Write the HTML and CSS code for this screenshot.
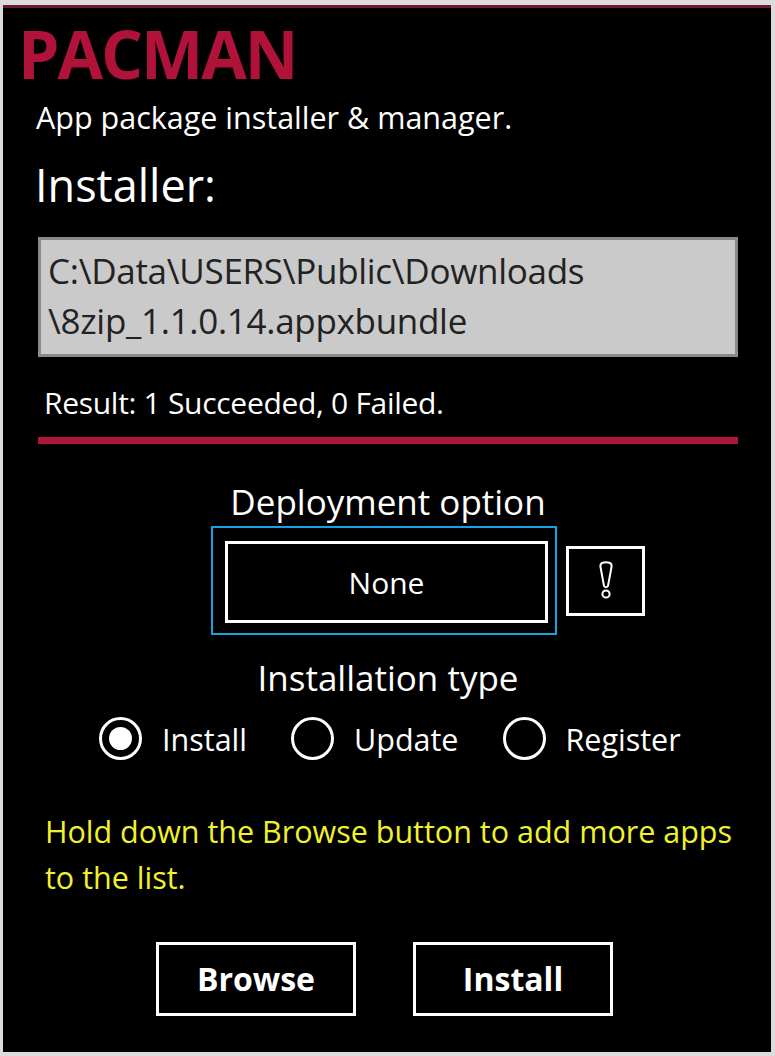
FILE: index.html
```html
<!DOCTYPE html>
<html lang="en">
<head>
    <meta charset="UTF-8">
    <meta name="viewport" content="width=device-width, initial-scale=1.0">
    <title>PACMAN</title>
    <link rel="stylesheet" href="styles.css">
</head>
<body>
    <div class="screen">
        <h1 class="app-title">PACMAN</h1>
        <p class="app-subtitle">App package installer &amp; manager.</p>
        <h2 class="section-title">Installer:</h2>

        <div class="path-box">C:\Data\USERS\Public\Downloads<br>\8zip_1.1.0.14.appxbundle</div>
        <p class="result">Result: 1 Succeeded, 0 Failed.</p>
        <div class="progress-bar"></div>

        <div class="deploy">
            <div class="label">Deployment option</div>
            <div class="deploy-row">
                <div class="focus-ring">
                    <button class="combo">None</button>
                </div>
                <button class="info-button" title="Info">
                    <svg width="18" height="40" viewBox="0 0 18 40">
                        <path d="M5 2 Q9 0.5 13 2 Q15 3 14.5 6 L11 25 Q9 27.5 7 25 L3.5 6 Q3 3 5 2 Z" fill="none" stroke="#fff" stroke-width="2" stroke-linejoin="round"/>
                        <circle cx="9" cy="33" r="3.6" fill="none" stroke="#fff" stroke-width="2"/>
                    </svg>
                </button>
            </div>
        </div>

        <div class="install-type">
            <div class="label">Installation type</div>
            <div class="radio-row">
                <label class="radio">
                    <span class="radio-circle checked"><span class="radio-dot"></span></span>
                    <span>Install</span>
                </label>
                <label class="radio">
                    <span class="radio-circle"></span>
                    <span>Update</span>
                </label>
                <label class="radio">
                    <span class="radio-circle"></span>
                    <span>Register</span>
                </label>
            </div>
        </div>

        <p class="hint">Hold down the Browse button to add more apps to the list.</p>

        <div class="actions">
            <button class="action">Browse</button>
            <button class="action">Install</button>
        </div>
    </div>
</body>
</html>
```

FILE: styles.css
```css
body {
    margin: 0;
    background-color: #dcdcdc;
    font-family: "Open Sans", "Noto Sans", sans-serif;
    color: #fff;
}
.screen {
    box-sizing: border-box;
    width: 768px;
    height: 1047px;
    margin: 5px 0 0 3px;
    background: #000;
    border-top: 3px solid #6e1a2e;
    padding: 0 33px 0 35px;
}
.app-title {
    margin: 9px 0 0 -20px;
    font-size: 66px;
    line-height: 72px;
    font-weight: 700;
    color: #b0123a;
    letter-spacing: -2px;
}
.app-subtitle {
    margin: 8px 0 0 -2px;
    font-size: 30.5px;
    line-height: 40px;
}
.section-title {
    margin: 20px 0 0 -3px;
    font-size: 45px;
    font-weight: 400;
    line-height: 56px;
}
.path-box {
    margin-top: 24px;
    box-sizing: border-box;
    height: 120px;
    background: #cacaca;
    border: 3px solid #8a8a8a;
    color: #222;
    font-size: 35px;
    line-height: 50px;
    padding: 6px 7px;
    letter-spacing: -0.3px;
}
.result {
    margin: 28px 0 0 6px;
    font-size: 30px;
    line-height: 36px;
    letter-spacing: -0.3px;
}
.progress-bar {
    margin-top: 16px;
    height: 7px;
    background: #ac163b;
}
.label {
    font-size: 35px;
    line-height: 42px;
    text-align: center;
}
.deploy {
    margin-top: 37px;
}
.deploy-row {
    display: flex;
    align-items: center;
    margin: 3px 0 0 173px;
    gap: 9px;
}
.focus-ring {
    border: 2px solid #13a3e0;
    padding: 13px 7px 10px 12px;
}
button {
    font-family: inherit;
    color: #fff;
    background: #000;
    cursor: pointer;
}
.combo {
    box-sizing: border-box;
    width: 323px;
    height: 82px;
    border: 3px solid #fff;
    font-size: 30px;
}
.info-button {
    box-sizing: border-box;
    width: 79px;
    height: 70px;
    border: 3px solid #fff;
    display: flex;
    align-items: center;
    justify-content: center;
    padding: 0;
}
.install-type {
    margin-top: 22px;
}
.radio-row {
    display: flex;
    margin: 18px 0 0 61px;
    gap: 44px;
}
.radio {
    display: flex;
    align-items: center;
    gap: 20px;
    font-size: 30.5px;
}
.radio-circle {
    box-sizing: border-box;
    width: 43px;
    height: 43px;
    border: 3px solid #fff;
    border-radius: 50%;
    display: flex;
    align-items: center;
    justify-content: center;
}
.radio-dot {
    width: 23px;
    height: 23px;
    border-radius: 50%;
    background: #fff;
}
.hint {
    margin: 48px 0 0 7px;
    color: #f2f22a;
    font-size: 30.5px;
    line-height: 46px;
}
.actions {
    display: flex;
    gap: 57px;
    margin: 42px 0 0 118px;
}
.action {
    box-sizing: border-box;
    width: 200px;
    height: 74px;
    border: 3px solid #fff;
    font-size: 32px;
    font-weight: 700;
    padding-bottom: 2px;
}
```
